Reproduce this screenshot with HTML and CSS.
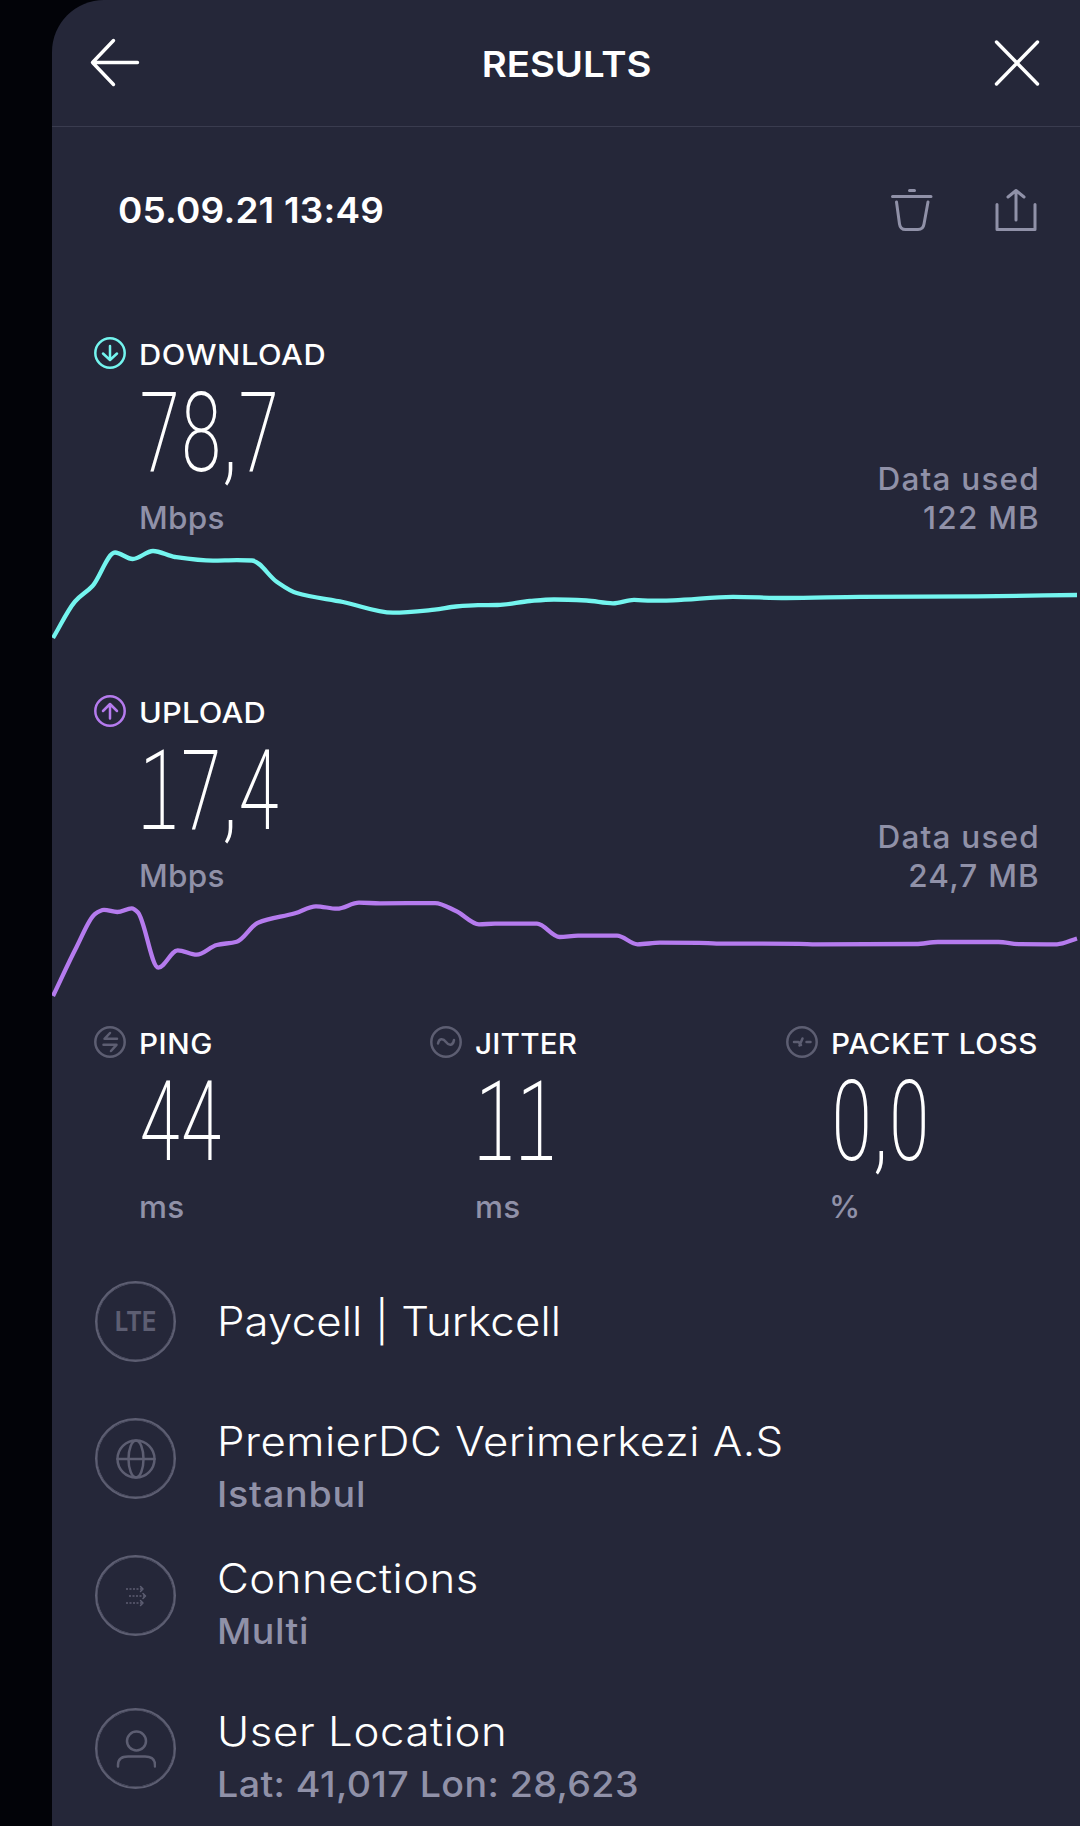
FILE: index.html
```
<!DOCTYPE html>
<html lang="en">
<head>
    <meta charset="UTF-8">
    <meta name="viewport" content="width=device-width, initial-scale=1.0">
    <title>Results</title>
    <link rel="stylesheet" href="styles.css">
</head>
<body>
    <div class="panel">
        <header class="topbar">
            <svg class="icon-back" width="50" height="50" viewBox="0 0 50 50">
                <path d="M47.500 24.500H2.500M23.500 2.500L2.500 24.500L23.500 46.500"/>
            </svg>
            <h1>RESULTS</h1>
            <svg class="icon-close" width="46" height="46" viewBox="0 0 46 46">
                <path d="M2.500 2L43.500 44M43.500 2L2.500 44"/>
            </svg>
        </header>

        <div class="date-row">
            <div class="date"><span>05.09.21 13:49</span></div>
            <svg class="action" width="42" height="42" viewBox="0 0 42 42">
                <path d="M18.500 1.500H23.500M1.500 7.500H40M5.500 13L8.500 35Q9.300 40.500 14.500 40.500H27Q32.200 40.500 33 35L37 13"/>
            </svg>
            <svg class="action" width="42" height="42" viewBox="0 0 42 42">
                <path d="M2 15.500V40.500H40V15.500M21 31V2M13 8L21 1.500L29 8"/>
            </svg>
        </div>

        <section class="transfer download">
            <div class="metric-head">
                <svg class="badge" width="32" height="32" viewBox="0 0 32 32">
                    <circle cx="16" cy="16" r="14.700"/>
                    <path d="M16 9V22.500M9 16.500L16 23L23 16.500"/>
                </svg>
                <h2>DOWNLOAD</h2>
            </div>
            <div class="reading">
                <div>
                    <div class="value">78,7</div>
                    <div class="unit">Mbps</div>
                </div>
                <div class="data-used">Data used<br>122 MB</div>
            </div>
            <svg class="chart" id="download-chart" width="1028" height="114" viewBox="52 537 1028 114"><path/></svg>
        </section>

        <section class="transfer upload">
            <div class="metric-head">
                <svg class="badge" width="32" height="32" viewBox="0 0 32 32">
                    <circle cx="16" cy="16" r="14.700"/>
                    <path d="M16 23.500V9.500M9 16L16 9L23 16"/>
                </svg>
                <h2>UPLOAD</h2>
            </div>
            <div class="reading">
                <div>
                    <div class="value"><span class="one">1</span>7,4</div>
                    <div class="unit">Mbps</div>
                </div>
                <div class="data-used">Data used<br>24,7 MB</div>
            </div>
            <svg class="chart" id="upload-chart" width="1028" height="114" viewBox="52 895 1028 114"><path/></svg>
        </section>

        <section class="stats">
            <div>
                <div class="metric-head">
                    <svg class="badge" width="32" height="32" viewBox="0 0 32 32">
                        <circle cx="16" cy="16" r="14.700"/>
                        <path d="M23 12.800H10.500L16 7M9.500 18.800H22.500L17 25"/>
                    </svg>
                    <h2>PING</h2>
                </div>
                <div class="value">44</div>
                <div class="unit">ms</div>
            </div>
            <div>
                <div class="metric-head jitter">
                    <svg class="badge" width="32" height="32" viewBox="0 0 32 32">
                        <circle cx="16" cy="16" r="14.700"/>
                        <path d="M8 17.500C9 12 13 12 16 16S23 20 24 14"/>
                    </svg>
                    <h2>JITTER</h2>
                </div>
                <div class="value"><span class="one">1</span><span class="one">1</span></div>
                <div class="unit">ms</div>
            </div>
            <div>
                <div class="metric-head loss">
                    <svg class="badge" width="32" height="32" viewBox="0 0 32 32">
                        <circle cx="16" cy="16" r="14.700"/>
                        <path d="M8 16H12.500L15 19M13.500 19.500L16.500 12.500M20.500 16H24.500"/>
                    </svg>
                    <h2>PACKET LOSS</h2>
                </div>
                <div class="value">0,0</div>
                <div class="unit percent">%</div>
            </div>
        </section>

        <ul class="details">
            <li class="single">
                <div class="round"><span class="lte">LTE</span></div>
                <div class="text">
                    <div class="title carrier">Paycell | Turkcell</div>
                </div>
            </li>
            <li>
                <div class="round">
                    <svg width="40" height="40" viewBox="0 0 40 40">
                        <circle cx="20" cy="20" r="18.500"/>
                        <ellipse cx="20" cy="20" rx="7.500" ry="18.500"/>
                        <path d="M1.500 20H38.500"/>
                    </svg>
                </div>
                <div class="text">
                    <div class="title">PremierDC Verimerkezi A.S</div>
                    <div class="sub city">Istanbul</div>
                </div>
            </li>
            <li>
                <div class="round">
                    <svg class="arrows" width="22" height="22" viewBox="0 0 22 22">
                        <path class="dots" d="M1 4H17M4 11H20M1 18H17"/>
                        <path d="M15.500 1.500L18 4L15.500 6.500M18 8.500L20.500 11L18 13.500M15.500 15.500L18 18L15.500 20.500"/>
                    </svg>
                </div>
                <div class="text">
                    <div class="title">Connections</div>
                    <div class="sub">Multi</div>
                </div>
            </li>
            <li class="location">
                <div class="round">
                    <svg width="40" height="40" viewBox="0 0 40 40">
                        <circle cx="20.500" cy="12" r="9.500"/>
                        <path d="M2 37.500V36Q2 27.500 12 27.500H29Q39 27.500 39 36V37.500"/>
                    </svg>
                </div>
                <div class="text">
                    <div class="title user">User Location</div>
                    <div class="sub coords">Lat: 41,017 Lon: 28,623</div>
                </div>
            </li>
        </ul>
    </div>

    <script>
        const download = [[53, 638], [75, 601.5], [92.7, 585.7], [115, 552.5], [132.7, 559], [153, 551], [175, 557], [213, 560.7], [236.7, 560.2], [252, 560.5], [276.7, 581.7], [296.7, 593], [343, 602], [393, 612.7], [434.7, 609.7], [456, 606.5], [478, 605.2], [497.6, 605], [530, 601], [554, 599.5], [586.5, 600.5], [613, 603.3], [634, 599.9], [651.5, 600.7], [673, 600.3], [733, 596.9], [786, 598], [860, 596.9], [977, 596.3], [1077, 595]];
        const upload = [[53, 996], [76.7, 946.7], [95, 914], [104, 909.8], [117.3, 912], [131.7, 908.3], [138, 912.5], [158.3, 967.7], [177.7, 950.3], [196.7, 954.7], [216.7, 945], [236.7, 941.7], [258, 922.7], [295, 913.3], [316, 906.3], [337, 908.7], [359, 902.7], [380, 903.3], [435, 903.1], [456, 911], [479, 924.3], [495, 923.7], [521, 923.7], [537, 923.6], [559.6, 937], [578, 935.7], [617, 935.7], [637.6, 944.3], [660, 942.7], [699, 942.8], [716.5, 943.6], [799, 943.8], [816, 944.3], [916, 944], [938, 942], [998.5, 942], [1020, 944.2], [1057, 944.3], [1077, 938.5]];

        // smooth line through the samples, flat at every peak and dip
        function drawChart(id, pts) {
            const n = pts.length;
            const slope = [];
            for (let i = 0; i < n - 1; i++) {
                slope.push((pts[i + 1][1] - pts[i][1]) / (pts[i + 1][0] - pts[i][0]));
            }
            const m = pts.map((p, i) => {
                if (i === 0) return slope[0];
                if (i === n - 1) return slope[n - 2];
                const a = slope[i - 1];
                const b = slope[i];
                return a * b <= 0 ? 0 : 2 * a * b / (a + b);
            });
            let d = `M${pts[0]}`;
            for (let i = 0; i < n - 1; i++) {
                const [x0, y0] = pts[i];
                const [x1, y1] = pts[i + 1];
                const h = (x1 - x0) / 3;
                d += `C${x0 + h},${y0 + m[i] * h} ${x1 - h},${y1 - m[i + 1] * h} ${x1},${y1}`;
            }
            document.querySelector(`#${id} path`).setAttribute('d', d);
        }

        drawChart('download-chart', download);
        drawChart('upload-chart', upload);
    </script>
</body>
</html>
```
FILE: styles.css
```
* {
    box-sizing: border-box;
}

body {
    margin: 0;
    height: 1826px;
    overflow: hidden;
    background-color: #020308;
    color: #ffffff;
    font-family: Inter, "Liberation Sans", sans-serif;
}

h1, h2, ul {
    margin: 0;
    padding: 0;
}

svg {
    display: block;
    fill: none;
    stroke: currentColor;
    stroke-linecap: round;
    stroke-linejoin: round;
}

.panel {
    height: 1826px;
    margin-left: 52px;
    background-color: #252739;
    border-top-left-radius: 52px;
    overflow: hidden;
}

/* Top bar */
.topbar {
    display: flex;
    align-items: center;
    justify-content: space-between;
    height: 127px;
    padding: 0 40px 0 38px;
    border-bottom: 1px solid #3a3c4f;
}

.topbar h1 {
    padding-top: 2px;
    font-size: 35.5px;
    font-weight: 600;
    transform: scaleX(1.08);
}

.icon-back, .icon-close {
    stroke-width: 3.4;
}

/* Date and actions */
.date-row {
    display: flex;
    align-items: center;
    height: 166px;
    padding: 0 43px 0 66px;
}

.date {
    flex: 1;
    font-size: 35.5px;
    font-weight: 600;
    letter-spacing: 0.2px;
    transform: scaleX(1.04);
    transform-origin: left;
}

.action {
    margin-left: 62px;
    color: #9091a8;
    stroke-width: 3;
}

/* Download and upload */
.transfer {
    padding-top: 44px;
}

.metric-head {
    display: flex;
    height: 32px;
    gap: 13px;
}

.transfer .metric-head {
    padding-left: 42px;
}

.metric-head h2 {
    padding-top: 4px;
    font-size: 28px;
    line-height: 28px;
    font-weight: 500;
    letter-spacing: 0.5px;
    white-space: nowrap;
    transform: scaleX(1.1);
    transform-origin: left;
}

.badge {
    flex: none;
    stroke-width: 2.5;
}

.download .badge, .download .chart {
    color: #74f5ef;
}

.upload .badge, .upload .chart {
    color: #b57bee;
}

.metric-head.jitter h2, .upload .metric-head h2 {
    letter-spacing: 0.2px;
}

.reading {
    display: flex;
    justify-content: space-between;
    align-items: flex-end;
    height: 168px;
    padding: 0 40px 0 87px;
}

.value {
    font-family: Roboto, "Liberation Sans", sans-serif;
    font-size: 111px;
    line-height: 129px;
    font-weight: 200;
    font-stretch: 75%;
    transform: scaleX(0.77);
    transform-origin: left;
    white-space: nowrap;
}

/* foot under the digit one */
.one {
    background: linear-gradient(#ffffff, #ffffff) no-repeat 6px 99px / 40px 4px;
}

.unit, .data-used {
    color: #9091a8;
    font-size: 31.5px;
    line-height: 39px;
    font-weight: 500;
    letter-spacing: 0.3px;
}

.data-used {
    text-align: right;
    letter-spacing: 1.2px;
}

.chart {
    stroke-width: 4.3;
    stroke-linecap: butt;
}

/* Ping, jitter, packet loss */
.stats {
    display: grid;
    grid-template-columns: 336px 356px 1fr;
    padding: 17px 0 0 42px;
}

.stats .badge {
    color: #5d5e72;
}

.stats .value, .stats .unit {
    margin-left: 45px;
}

.stats .percent {
    margin-left: 43px;
}

.stats h2 {
    transform: scaleX(1.06);
}

/* Connection details */
.details {
    padding: 55px 0 0 43px;
    list-style: none;
}

.details li {
    display: flex;
    gap: 41px;
    height: 80px;
    margin-bottom: 57px;
}

.details .location {
    margin-top: 73px;
}

.round {
    display: flex;
    flex: none;
    align-items: center;
    justify-content: center;
    width: 81px;
    height: 81px;
    border: 2px solid #5d5e72;
    border-radius: 50%;
    color: #5d5e72;
    box-shadow: inset 0 0 0 0.500px #5d5e72;
}

.round svg {
    stroke-width: 2.5;
}

.round .arrows {
    stroke-width: 1.5;
}

.dots {
    stroke-dasharray: 2 1.500;
    stroke-linecap: butt;
}

.lte {
    font-size: 27px;
    font-weight: 700;
    transform: scaleX(0.87);
}

.text {
    margin-top: -4px;
    white-space: nowrap;
}

.single .text {
    margin-top: 13px;
}

.title {
    font-size: 40.5px;
    line-height: 56px;
    font-weight: 300;
    letter-spacing: 0.45px;
    transform: scaleX(1.08);
    transform-origin: left;
}

.carrier {
    letter-spacing: 0.13px;
}

.user {
    letter-spacing: 0.55px;
}

.sub {
    padding-top: 1px;
    color: #9091a8;
    font-size: 35.5px;
    line-height: 48px;
    font-weight: 500;
    letter-spacing: 0.5px;
    transform: scaleX(1.06);
    transform-origin: left;
}

.city {
    letter-spacing: 0.75px;
}

.coords {
    letter-spacing: 0.36px;
}
```
